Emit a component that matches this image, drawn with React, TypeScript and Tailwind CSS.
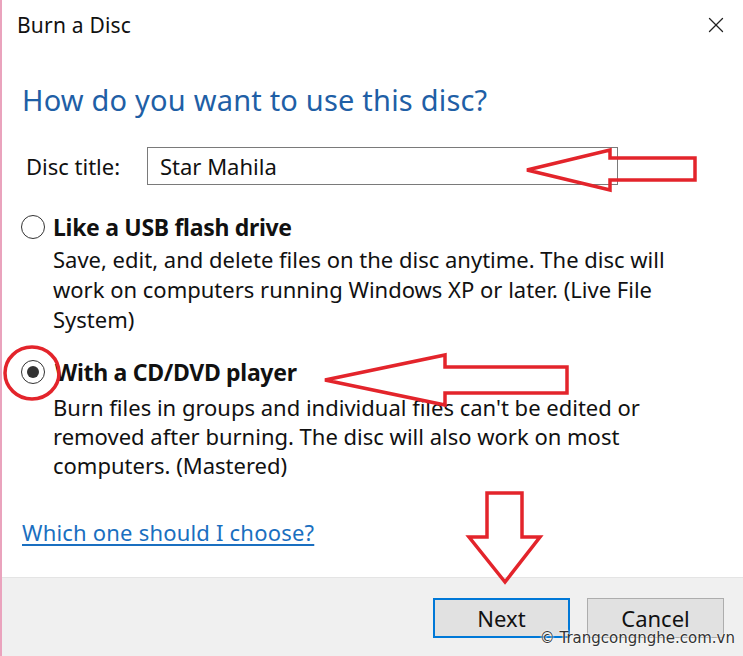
import { X } from "lucide-react";

const Radio = ({ checked }: { checked?: boolean }) => (
  <span className="flex h-[24px] w-[24px] shrink-0 items-center justify-center rounded-full border-[1.5px] border-[#333] bg-white">
    {checked && <span className="h-[12px] w-[12px] rounded-full bg-[#333]" />}
  </span>
);

const Annotations = () => (
  <svg
    className="pointer-events-none absolute inset-0"
    width="743"
    height="656"
    viewBox="0 0 743 656"
    fill="none"
    stroke="#e3242b"
    strokeWidth="3.5"
    strokeLinejoin="miter"
  >
    {/* arrow to disc title */}
    <path d="M525 170 L608 150 L608 158 L693 158 L693 180 L608 180 L608 190 Z" />
    {/* arrow to cd/dvd option */}
    <path d="M323 380 L443 355 L443 367 L565 367 L565 393 L443 393 L443 405 Z" />
    {/* arrow down to Next */}
    <path d="M485 493 L520 493 L520 537 L538 537 L503 582 L467 537 L485 537 Z" />
    {/* circle around radio */}
    <ellipse cx="30" cy="373" rx="27" ry="26" />
  </svg>
);

export default function App() {
  return (
    <div
      className="relative flex h-[656px] w-[743px] flex-col overflow-hidden border-l-[2px] border-[#eaa3bd] bg-white text-[#111]"
      style={{ fontFamily: '"Noto Sans", "Open Sans", sans-serif' }}
    >
      {/* title bar */}
      <div className="flex h-[50px] items-center justify-between pl-[15px] pr-[14px]">
        <span className="mt-[2px] text-[21px] tracking-[0.2px]">Burn a Disc</span>
        <X className="h-[26px] w-[26px] text-[#222]" strokeWidth={1.2} />
      </div>

      {/* body */}
      <div className="flex flex-1 flex-col pl-[20px]">
        <h1 className="mt-[31px] whitespace-nowrap text-[29px] leading-[38px] tracking-[0.2px] text-[#1f5fa6]">
          How do you want to use this disc?
        </h1>

        <div className="mt-[28px] flex items-center">
          <span className="w-[125px] pl-[4px] text-[22px]">Disc title:</span>
          <div className="flex h-[38px] w-[471px] items-center border border-[#7a7a7a] px-[12px] text-[22px]">
            Star Mahila
          </div>
        </div>

        <div className="mt-[28px] flex h-[28px] items-center gap-[8px]">
          <span className="-ml-[1px]">
            <Radio />
          </span>
          <span className="whitespace-nowrap text-[23px] font-bold leading-[28px] tracking-[-0.3px]">
            Like a USB flash drive
          </span>
        </div>
        <p className="mt-[3px] whitespace-nowrap pl-[31px] text-[22px] leading-[30px]">
          Save, edit, and delete files on the disc anytime. The disc will
          <br />
          work on computers running Windows XP or later. (Live File
          <br />
          System)
        </p>

        <div className="mt-[24px] flex h-[28px] items-center gap-[10px]">
          <span className="-ml-[1px]">
            <Radio checked />
          </span>
          <span className="whitespace-nowrap text-[23px] font-bold leading-[28px] tracking-[-0.3px]">
            With a CD/DVD player
          </span>
        </div>
        <p className="mt-[7px] whitespace-nowrap pl-[31px] text-[22px] leading-[29px]">
          Burn files in groups and individual files can't be edited or
          <br />
          removed after burning. The disc will also work on most
          <br />
          computers. (Mastered)
        </p>

        <a className="mt-[36px] w-fit whitespace-nowrap text-[22px] tracking-[0.2px] text-[#1a6fc0] underline underline-offset-[3px]">
          Which one should I choose?
        </a>
      </div>

      {/* footer */}
      <div className="flex h-[79px] justify-end gap-[17px] border-t border-[#e4e4e4] bg-[#f0f0f0] pr-[19px] pt-[20px]">
        <button className="h-[40px] w-[137px] border-2 border-[#0078d7] bg-[#e1e1e1] text-[22px] text-[#111]">
          Next
        </button>
        <button className="h-[40px] w-[137px] border border-[#adadad] bg-[#e1e1e1] text-[22px] text-[#111]">
          Cancel
        </button>
      </div>

      <Annotations />

      <span
        className="absolute right-[8px] top-[627px] text-[15px] text-[#333] [text-shadow:0_0_2px_#fff,0_0_2px_#fff]"
        style={{ fontFamily: '"DejaVu Sans", sans-serif' }}
      >
        © Trangcongnghe.com.vn
      </span>
    </div>
  );
}
